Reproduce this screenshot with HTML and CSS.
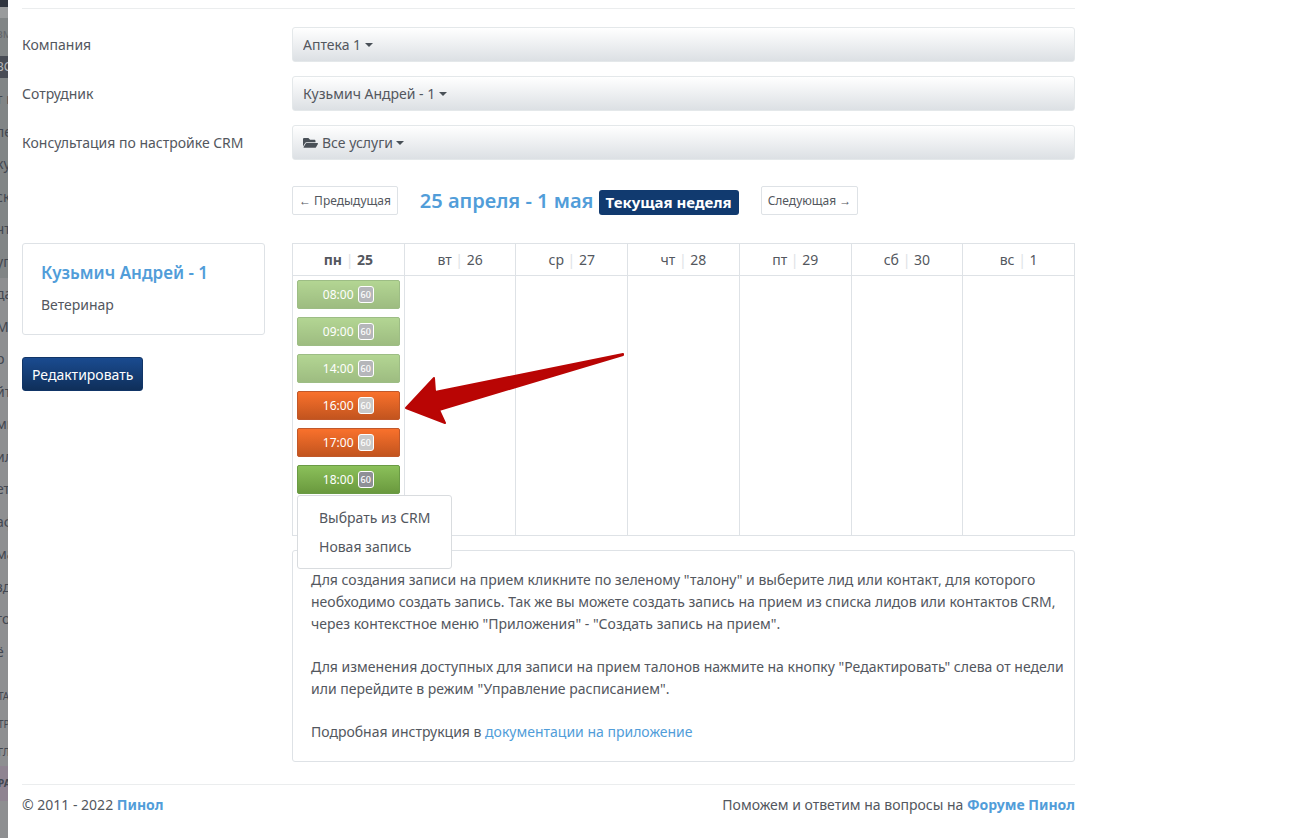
FILE: index.html
```
<!DOCTYPE html>
<html lang="ru">
<head>
  <meta charset="UTF-8" />
  <meta name="viewport" content="width=device-width, initial-scale=1" />
  <title>Запись на прием</title>
  <link rel="stylesheet" href="styles.css">
</head>
<body>
  <aside class="sidebar">
    <div class="sidebar-top"></div>
    <ul class="side-menu">
      <li class="shade muted">вм</li>
      <li class="shade"><span class="current">ВС</span></li>
      <li class="shade">т и</li>
      <li class="shade">ле</li>
      <li class="shade">ку</li>
      <li class="shade">ск</li>
      <li class="shade">чт</li>
      <li class="shade">уп</li>
      <li>да</li>
      <li>М</li>
      <li>р</li>
      <li>йт</li>
      <li>ми</li>
      <li>ил</li>
      <li>ет</li>
      <li>аф</li>
      <li>ма</li>
      <li>зд</li>
      <li>го</li>
      <li>ё</li>
    </ul>
    <ul class="side-links">
      <li>ТА</li>
      <li>ТР</li>
      <li>ГЛ</li>
      <li class="accent">РА</li>
    </ul>
  </aside>

  <div class="page">
    <main class="container">
      <form class="filters">
        <label for="company">Компания</label>
        <div class="select">
          <select id="company"><option>Аптека 1</option></select>
        </div>

        <label for="employee">Сотрудник</label>
        <div class="select">
          <select id="employee"><option>Кузьмич Андрей - 1</option></select>
        </div>

        <label for="service">Консультация по настройке CRM</label>
        <div class="select">
          <svg class="folder" viewBox="0 0 576 512" aria-hidden="true"><path d="M573 293l-73 125a48 48 0 0 1-41 24H45c-18 0-30-20-20-36l72-125a48 48 0 0 1 42-24h413c19 0 30 20 21 36zM139 225h341v-48c0-27-21-48-48-48H272l-64-64H48c-27 0-48 21-48 48v278l69-119a81 81 0 0 1 70-47z"/></svg>
          <select id="service"><option>Все услуги</option></select>
        </div>
      </form>

      <div class="week-nav">
        <button type="button" class="btn-week">← Предыдущая</button>
        <h2>25 апреля - 1 мая <span class="badge">Текущая неделя</span></h2>
        <button type="button" class="btn-week">Следующая →</button>
      </div>

      <div class="row">
        <aside class="employee">
          <div class="card">
            <h3>Кузьмич Андрей - 1</h3>
            <p>Ветеринар</p>
          </div>
          <button type="button" class="btn-edit">Редактировать</button>
        </aside>

        <div class="schedule">
          <table class="week">
            <thead>
              <tr>
                <th class="today">пн <i>|</i> 25</th>
                <th>вт <i>|</i> 26</th>
                <th>ср <i>|</i> 27</th>
                <th>чт <i>|</i> 28</th>
                <th>пт <i>|</i> 29</th>
                <th>сб <i>|</i> 30</th>
                <th>вс <i>|</i> 1</th>
              </tr>
            </thead>
            <tbody>
              <tr>
                <td>
                  <div class="slots">
                    <button type="button" class="slot past">08:00 <span>60</span></button>
                    <button type="button" class="slot past">09:00 <span>60</span></button>
                    <button type="button" class="slot past">14:00 <span>60</span></button>
                    <button type="button" class="slot busy">16:00 <span>60</span></button>
                    <button type="button" class="slot busy">17:00 <span>60</span></button>
                    <div class="dropdown">
                      <button type="button" class="slot">18:00 <span>60</span></button>
                      <div class="dropdown-menu">
                        <a href="#">Выбрать из CRM</a>
                        <a href="#">Новая запись</a>
                      </div>
                    </div>
                    <button type="button" class="slot" aria-label="Свободный талон"></button>
                  </div>
                </td>
                <td></td>
                <td></td>
                <td></td>
                <td></td>
                <td></td>
                <td></td>
              </tr>
            </tbody>
          </table>

          <svg class="arrow" viewBox="0 0 222 76" aria-hidden="true"><path d="M2 57L30 27L31 41L219 3L219 4L35 59L41 72Z"/></svg>

          <div class="card help">
            <p>Для создания записи на прием кликните по зеленому "талону" и выберите лид или контакт, для которого необходимо создать запись. Так же вы можете создать запись на прием из списка лидов или контактов CRM, через контекстное меню "Приложения" - "Создать запись на прием".</p>
            <p>Для изменения доступных для записи на прием талонов нажмите на кнопку "Редактировать" слева от недели или перейдите в режим "Управление расписанием".</p>
            <p>Подробная инструкция в <a href="#">документации на приложение</a></p>
          </div>
        </div>
      </div>

      <footer>
        <span>© 2011 - 2022 <a href="#">Пинол</a></span>
        <span>Поможем и ответим на вопросы на <a href="#">Форуме Пинол</a></span>
      </footer>
    </main>
  </div>
</body>
</html>
```
FILE: styles.css
```
* {
  box-sizing: border-box;
}

body {
  margin: 0;
  display: flex;
  min-height: 100vh;
  background: #fff;
  color: #53575e;
  font-family: "Noto Sans", "Open Sans", sans-serif;
  font-size: 14px;
  line-height: 22px;
}

h2, h3, p, ul {
  margin: 0;
  padding: 0;
}

button, select {
  font-family: inherit;
  color: inherit;
  cursor: pointer;
}

a {
  color: #519dd9;
  text-decoration: none;
}

/* затемненное меню под слайдером */
.sidebar {
  width: 8px;
  flex: none;
  overflow: hidden;
  background: #8e8f91;
  color: #434851;
  white-space: nowrap;
}

.sidebar ul {
  list-style: none;
}

.sidebar-top {
  height: 18px;
  border-top: 7px solid #30353f;
  background: #999b9c;
}

.side-menu {
  height: 650px;
  display: grid;
  grid-auto-rows: 1fr;
}

.side-menu li {
  display: flex;
  align-items: center;
  text-indent: -4px;
}

.side-menu .shade {
  background: #818586;
}

.side-menu .muted {
  color: #63676b;
  font-size: 12px;
}

.current {
  background: #484c55;
  color: #b5b7ba;
  font-size: 12px;
}

.side-links {
  padding-top: 14px;
  font-size: 10px;
  line-height: 28px;
  text-indent: -2px;
}

.side-links .accent {
  background: #8f8491;
  font-weight: bold;
  line-height: 35px;
}

.page {
  flex: 1;
  padding: 8px 14px 0;
}

.container {
  max-width: 1053px;
  border-top: 1px solid #ebedee;
  padding-top: 18px;
}

.filters {
  display: grid;
  grid-template-columns: 243px 1fr;
  gap: 14px 27px;
  align-items: center;
}

.select {
  display: flex;
  align-items: center;
  height: 35px;
  padding: 0 10px;
  border: 1px solid #e4e8ea;
  border-radius: 3px;
  background: linear-gradient(#fff, #dce0e4);
}

.select select {
  appearance: none;
  border: 0;
  padding: 0;
  background: none;
  font-size: 14px;
}

.select::after {
  content: "";
  margin-left: 3px;
  border: 4px solid transparent;
  border-top-color: #495057;
  border-bottom: 0;
}

.folder {
  width: 15px;
  height: 14px;
  margin-right: 4px;
  fill: #495057;
}

.week-nav {
  display: flex;
  align-items: center;
  margin: 26px 0 28px 270px;
}

.btn-week {
  height: 29px;
  padding: 0 6px;
  border: 1px solid #dee2e6;
  border-radius: 2px;
  background: #fff;
  font-size: 12px;
}

.week-nav h2 {
  margin: 0 22px;
  color: #519dd9;
  font-size: 20px;
  font-weight: 600;
  line-height: 28px;
}

.badge {
  display: inline-block;
  padding: 0 7px;
  border-radius: 3px;
  background: #113a6f;
  color: #fff;
  font-size: 15px;
  font-weight: bold;
  line-height: 25px;
}

.row {
  display: grid;
  grid-template-columns: 243px 1fr;
  gap: 27px;
  align-items: start;
}

.card {
  border: 1px solid #dee2e6;
  border-radius: 3px;
  padding: 18px;
}

.employee h3 {
  margin-bottom: 10px;
  color: #519dd9;
  font-size: 17px;
  font-weight: 600;
}

.btn-edit {
  height: 34px;
  margin-top: 22px;
  padding: 0 9px;
  border: 1px solid #113567;
  border-radius: 3px;
  background: linear-gradient(#1a4b90, #0f2f5a);
  color: #fff;
  font-size: 14px;
}

.schedule {
  position: relative;
}

.week {
  width: 100%;
  table-layout: fixed;
  border-collapse: collapse;
}

.week th,
.week td {
  border: 1px solid #dee2e6;
}

.week th {
  padding: 5px 0 4px;
  font-weight: normal;
}

.week th.today {
  font-weight: bold;
}

.week i {
  color: #dee2e6;
  font-style: normal;
  font-weight: normal;
}

.week td {
  padding: 4px;
  vertical-align: top;
}

.slots {
  display: grid;
  gap: 8px;
}

.slot {
  display: flex;
  align-items: center;
  justify-content: center;
  gap: 4px;
  width: 100%;
  height: 29px;
  padding: 0;
  border: 1px solid #6a9b45;
  border-radius: 2px;
  background: linear-gradient(#8bc05a, #6a993e);
  color: #fff;
  font-size: 12px;
}

.slot span {
  padding: 0 2px;
  border: 1px solid #fff;
  border-radius: 3px;
  background: #8e9096;
  font-size: 9px;
  font-weight: 500;
  line-height: 15px;
}

.slot.past {
  opacity: 0.65;
}

.slot.busy {
  border-color: #c1582a;
  background: linear-gradient(#f9712c, #c2541e);
}

.slot.busy span {
  background: #c8c8c8;
}

.dropdown {
  position: relative;
}

.dropdown-menu {
  position: absolute;
  top: 30px;
  left: 0;
  z-index: 1;
  padding: 7px 21px;
  border: 1px solid #d9dcdf;
  border-radius: 3px;
  background: #fff;
  white-space: nowrap;
}

.dropdown-menu a {
  display: block;
  color: #53575e;
  line-height: 29px;
}

.arrow {
  position: absolute;
  top: 108px;
  left: 112px;
  width: 222px;
  fill: #b90504;
  stroke: #b90504;
  stroke-width: 2px;
  stroke-linejoin: round;
  pointer-events: none;
}

.help {
  display: grid;
  gap: 21px;
  margin-top: 14px;
  padding-right: 8px;
}

footer {
  display: flex;
  justify-content: space-between;
  margin-top: 22px;
  padding: 9px 0 20px;
  border-top: 1px solid #ebedee;
}

footer a {
  font-weight: bold;
}
```
